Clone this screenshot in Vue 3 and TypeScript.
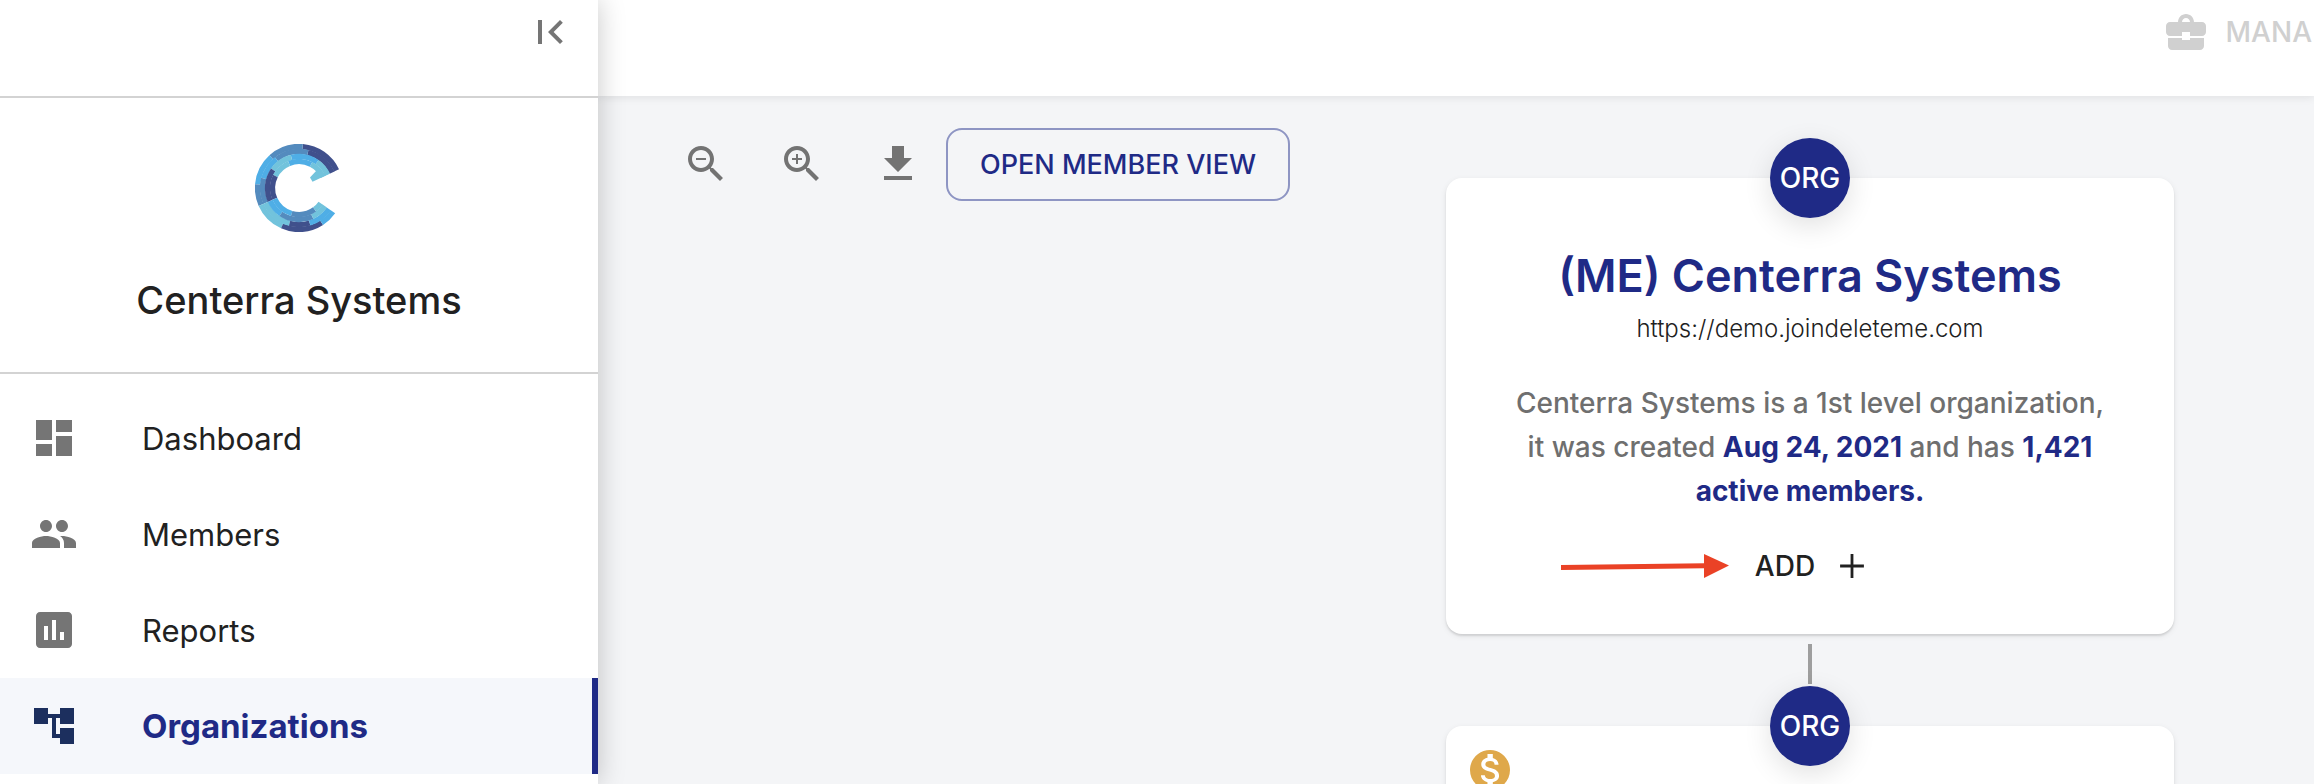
<script setup lang="ts">
interface NavItem {
  label: string
  icon: string
  active?: boolean
}

const icons = {
  firstPage: 'M18.41 16.59 13.82 12l4.59-4.59L17 6l-6 6 6 6zM6 6h2v12H6z',
  dashboard: 'M3 13h8V3H3v10zm0 8h8v-6H3v6zm10 0h8V11h-8v10zm0-18v6h8V3h-8z',
  people:
    'M16 11c1.66 0 2.99-1.34 2.99-3S17.66 5 16 5s-3 1.34-3 3 1.34 3 3 3zm-8 0c1.66 0 2.99-1.34 2.99-3S9.66 5 8 5 5 6.34 5 8s1.34 3 3 3zm0 2c-2.33 0-7 1.17-7 3.5V19h14v-2.5c0-2.33-4.67-3.5-7-3.5zm8 0c-.29 0-.62.02-.97.05 1.16.84 1.97 1.97 1.97 3.45V19h6v-2.5c0-2.33-4.67-3.5-7-3.5z',
  assessment:
    'M19 3H5c-1.1 0-2 .9-2 2v14c0 1.1.9 2 2 2h14c1.1 0 2-.9 2-2V5c0-1.1-.9-2-2-2zM9 17H7v-7h2v7zm4 0h-2V7h2v10zm4 0h-2v-4h2v4z',
  accountTree: 'M22 11V3h-7v3H9V3H2v8h7V8h2v10h4v3h7v-8h-7v3h-2V8h2v3z',
  zoomOut:
    'M15.5 14h-.79l-.28-.27C15.41 12.59 16 11.11 16 9.5 16 5.91 13.09 3 9.5 3S3 5.91 3 9.5 5.91 16 9.5 16c1.61 0 3.09-.59 4.23-1.57l.27.28v.79l5 4.99L20.49 19l-4.99-5zm-6 0C7.01 14 5 11.99 5 9.5S7.01 5 9.5 5 14 7.01 14 9.5 11.99 14 9.5 14zM7 9h5v1H7z',
  zoomIn:
    'M15.5 14h-.79l-.28-.27C15.41 12.59 16 11.11 16 9.5 16 5.91 13.09 3 9.5 3S3 5.91 3 9.5 5.91 16 9.5 16c1.61 0 3.09-.59 4.23-1.57l.27.28v.79l5 4.99L20.49 19l-4.99-5zm-6 0C7.01 14 5 11.99 5 9.5S7.01 5 9.5 5 14 7.01 14 9.5 11.99 14 9.5 14zm2.5-4h-2v2H9v-2H7V9h2V7h1v2h2v1z',
  download: 'M15 9V3H9v6H5l7 7 7-7zM5 18v2h14v-2z',
  briefcase:
    'M10 16v-1H3.01L3 19c0 1.11.89 2 2 2h14c1.11 0 2-.89 2-2v-4h-7v1h-4zm10-9h-4.01C15.99 4.79 14.2 3 12 3S8.01 4.79 8.01 7H4c-1.1 0-2 .9-2 2v3c0 1.11.89 2 2 2h6v-2h4v2h6c1.1 0 2-.9 2-2V9c0-1.1-.9-2-2-2zM10 7c0-1.1.9-2 2-2s2 .9 2 2h-4z',
  add: 'M18.8 12.8h-6v6h-1.6v-6h-6v-1.6h6v-6h1.6v6h6z',
  paid:
    'M12 2C6.48 2 2 6.48 2 12s4.48 10 10 10 10-4.48 10-10S17.52 2 12 2zm1.41 16.09V20h-2.67v-1.93c-1.71-.36-3.16-1.46-3.27-3.4h1.96c.1 1.05.82 1.87 2.65 1.87 1.96 0 2.4-.98 2.4-1.59 0-.83-.44-1.61-2.67-2.14-2.48-.6-4.18-1.62-4.18-3.67 0-1.72 1.39-2.84 3.11-3.21V4h2.67v1.95c1.86.45 2.79 1.86 2.85 3.39H14.3c-.05-1.11-.64-1.87-2.22-1.87-1.5 0-2.4.68-2.4 1.64 0 .84.65 1.39 2.67 1.91s4.18 1.39 4.18 3.91c-.01 1.83-1.38 2.83-3.12 3.16z',
}

const navItems: NavItem[] = [
  { label: 'Dashboard', icon: icons.dashboard },
  { label: 'Members', icon: icons.people },
  { label: 'Reports', icon: icons.assessment },
  { label: 'Organizations', icon: icons.accountTree, active: true },
]

const tools = [
  { label: 'Zoom out', icon: icons.zoomOut },
  { label: 'Zoom in', icon: icons.zoomIn },
  { label: 'Download', icon: icons.download },
]

/* The logo is four thin concentric rings; each ring lists its colour
   boundaries in degrees, running anticlockwise round the C. */
const navy = '#40508c'
const steel = '#548bbe'
const sky = '#4faee6'
const teal = '#72c3dc'
const outerColors = [navy, steel, sky, steel, teal, navy, sky]
const innerColors = [teal, sky, teal, navy, sky, steel, teal]
const rings = [
  { r: 41.5, colors: outerColors, stops: [-25, -85, -132, -175, -204, -246, -303, -325] },
  { r: 36.5, colors: outerColors, stops: [-25, -76, -128, -165, -204, -255, -287, -325] },
  { r: 31.5, colors: innerColors, stops: [-25, -55, -104, -145, -204, -235, -295, -325] },
  { r: 26.5, colors: innerColors, stops: [-25, -63, -112, -153, -204, -254, -306, -325] },
]

function point(r: number, deg: number): string {
  const a = (deg * Math.PI) / 180
  return `${(44 + r * Math.cos(a)).toFixed(2)} ${(44 + r * Math.sin(a)).toFixed(2)}`
}

const logoArcs = rings.flatMap(({ r, colors, stops }) =>
  colors.map((color, i) => ({
    color,
    d: `M${point(r, stops[i])}A${r} ${r} 0 0 0 ${point(r, stops[i + 1])}`,
  })),
)
</script>

<template>
  <div class="shell">
    <aside class="sidebar">
      <div class="sidebar-top">
        <button class="icon-button" type="button" aria-label="Collapse menu">
          <svg class="icon" viewBox="0 0 24 24"><path :d="icons.firstPage" /></svg>
        </button>
      </div>
      <div class="company">
        <svg class="logo" viewBox="0 0 88 88" aria-hidden="true">
          <path
            v-for="arc in logoArcs"
            :key="arc.d"
            :d="arc.d"
            :stroke="arc.color"
            stroke-width="5.3"
            fill="none"
          />
          <path d="M61.5 26.5 55 33.5l2.5 4.3L74 30z" :fill="teal" />
        </svg>
        <h2 class="company-name">Centerra Systems</h2>
      </div>
      <nav class="nav">
        <a
          v-for="item in navItems"
          :key="item.label"
          href="#"
          class="nav-item"
          :class="{ active: item.active }"
        >
          <svg class="icon" viewBox="0 0 24 24" aria-hidden="true"><path :d="item.icon" /></svg>
          <span>{{ item.label }}</span>
        </a>
      </nav>
    </aside>

    <div class="content">
      <header class="topbar">
        <button class="manage" type="button">
          <svg class="icon" viewBox="0 0 24 24" aria-hidden="true"><path :d="icons.briefcase" /></svg>
          <span>MANA</span>
        </button>
      </header>

      <main class="board">
        <div class="toolbar">
          <button
            v-for="tool in tools"
            :key="tool.label"
            class="tool"
            type="button"
            :aria-label="tool.label"
          >
            <svg class="icon" viewBox="0 0 24 24"><path :d="tool.icon" /></svg>
          </button>
          <button class="member-view" type="button">OPEN MEMBER VIEW</button>
        </div>

        <div class="chart">
          <article class="card">
            <span class="badge">ORG</span>
            <h1 class="org-name">(ME) Centerra Systems</h1>
            <a class="org-url" href="#">https://demo.joindeleteme.com</a>
            <p class="summary">
              Centerra Systems is a 1st level organization, it was created
              <strong>Aug 24, 2021</strong> and has <strong>1,421 active members.</strong>
            </p>
            <div class="actions">
              <svg class="pointer" viewBox="0 0 168 26" aria-hidden="true">
                <path d="M0 14.5 144 12.8" stroke="#ea4226" stroke-width="5" />
                <path d="M143 1v24l25-12.5z" fill="#ea4226" />
              </svg>
              <button class="add" type="button">
                <span>ADD</span>
                <svg class="add-icon" viewBox="0 0 24 24" aria-hidden="true"><path :d="icons.add" /></svg>
              </button>
            </div>
          </article>
          <div class="connector"></div>
          <article class="card">
            <span class="badge">ORG</span>
            <svg class="paid" viewBox="0 0 24 24" aria-hidden="true"><path :d="icons.paid" /></svg>
          </article>
        </div>
      </main>
    </div>
  </div>
</template>

<style>
body {
  margin: 0;
}
</style>

<style scoped>
.shell {
  display: flex;
  height: 100vh;
  overflow: hidden;
  background: #f4f5f7;
  color: #212121;
  font-family: Inter, 'Liberation Sans', sans-serif;
}

button {
  margin: 0;
  padding: 0;
  border: 0;
  background: none;
  color: inherit;
  font: inherit;
  cursor: pointer;
}

a {
  color: inherit;
  text-decoration: none;
}

.icon {
  display: block;
  flex: none;
  width: 48px;
  height: 48px;
  fill: currentColor;
}

.sidebar {
  position: relative;
  z-index: 2;
  flex: none;
  width: 598px;
  background: #fff;
  box-shadow: 0 0 26px rgba(0, 0, 0, 0.22);
}

.sidebar-top {
  display: flex;
  justify-content: flex-end;
  height: 88px;
  padding: 8px 24px 0;
  border-bottom: 2px solid #d3d3d3;
}

.icon-button {
  height: 48px;
  color: #757575;
}

.company {
  display: flex;
  flex-direction: column;
  align-items: center;
  gap: 40px;
  padding: 46px 24px 44px;
  border-bottom: 2px solid #d3d3d3;
}

.logo {
  width: 88px;
  height: 88px;
}

.company-name {
  margin: 0;
  font-size: 38px;
  font-weight: 500;
  line-height: 56px;
}

.nav {
  padding-top: 16px;
}

.nav-item {
  display: flex;
  align-items: center;
  gap: 64px;
  height: 96px;
  padding-left: 30px;
  font-size: 31px;
}

.nav-item .icon {
  color: #757575;
}

.nav-item.active {
  border-right: 6px solid #1f2a86;
  background: #f5f7fb;
  color: #1f2a86;
  font-size: 33px;
  font-weight: 700;
}

.nav-item.active .icon {
  color: #1c2f5e;
}

.content {
  display: flex;
  flex: 1;
  flex-direction: column;
  min-width: 0;
}

.topbar {
  position: relative;
  z-index: 1;
  display: flex;
  flex: none;
  justify-content: flex-end;
  height: 88px;
  padding: 8px 2px 0 0;
  background: #fff;
  box-shadow: 0 2px 8px rgba(0, 0, 0, 0.08);
}

.manage {
  display: flex;
  align-items: center;
  gap: 16px;
  height: 48px;
  color: #d0d0d0;
  font-size: 28px;
  font-weight: 500;
}

.board {
  display: flex;
  flex: 1;
  align-items: flex-start;
  justify-content: space-between;
  min-height: 0;
  padding: 32px 140px 0 60px;
}

.toolbar {
  display: flex;
  align-items: flex-start;
}

.tool {
  display: grid;
  flex: none;
  place-items: center;
  width: 96px;
  height: 72px;
  color: #737373;
}

.member-view {
  height: 73px;
  padding: 0 32px;
  border: 2px solid #8e95c3;
  border-radius: 16px;
  color: #1f2a86;
  font-size: 27px;
  font-weight: 500;
  white-space: nowrap;
}

.chart {
  display: flex;
  flex: none;
  flex-direction: column;
  align-items: center;
  width: 728px;
  padding-top: 50px;
}

.card {
  position: relative;
  box-sizing: border-box;
  display: flex;
  flex-direction: column;
  align-items: center;
  width: 100%;
  min-height: 456px;
  padding: 70px 68px 32px;
  border-radius: 16px;
  background: #fff;
  box-shadow:
    0 2px 2px rgba(0, 0, 0, 0.1),
    0 2px 6px rgba(0, 0, 0, 0.08);
}

.badge {
  position: absolute;
  top: -40px;
  left: 50%;
  display: grid;
  place-items: center;
  width: 80px;
  height: 80px;
  margin-left: -40px;
  border-radius: 50%;
  background: #1f2a86;
  box-shadow: 0 8px 28px rgba(0, 0, 0, 0.12);
  color: #fff;
  font-size: 28px;
  font-weight: 500;
}

.org-name {
  margin: 0;
  color: #1f2a86;
  font-size: 45px;
  font-weight: 600;
  line-height: 56px;
  white-space: nowrap;
}

.org-url {
  margin-top: 8px;
  font-size: 24px;
  font-weight: 300;
  line-height: 34px;
}

.summary {
  margin: 35px 0 20px;
  color: #6f6f6f;
  font-size: 28px;
  font-weight: 500;
  line-height: 44px;
  text-align: center;
}

.summary strong {
  color: #1f2a86;
  font-weight: 700;
}

.actions {
  position: relative;
}

.add {
  display: flex;
  align-items: center;
  gap: 16px;
  height: 66px;
  padding: 0 12px 0 20px;
  font-size: 28px;
  font-weight: 500;
}

.add-icon {
  width: 42px;
  height: 42px;
  fill: currentColor;
}

.pointer {
  position: absolute;
  top: 20px;
  right: 100%;
  width: 168px;
  height: 26px;
  margin-right: 6px;
}

.connector {
  width: 4px;
  height: 40px;
  margin: 10px 0 42px;
  background: #9e9e9e;
}

.paid {
  position: absolute;
  top: 20px;
  left: 20px;
  width: 48px;
  height: 48px;
  fill: #dfa84a;
}
</style>
